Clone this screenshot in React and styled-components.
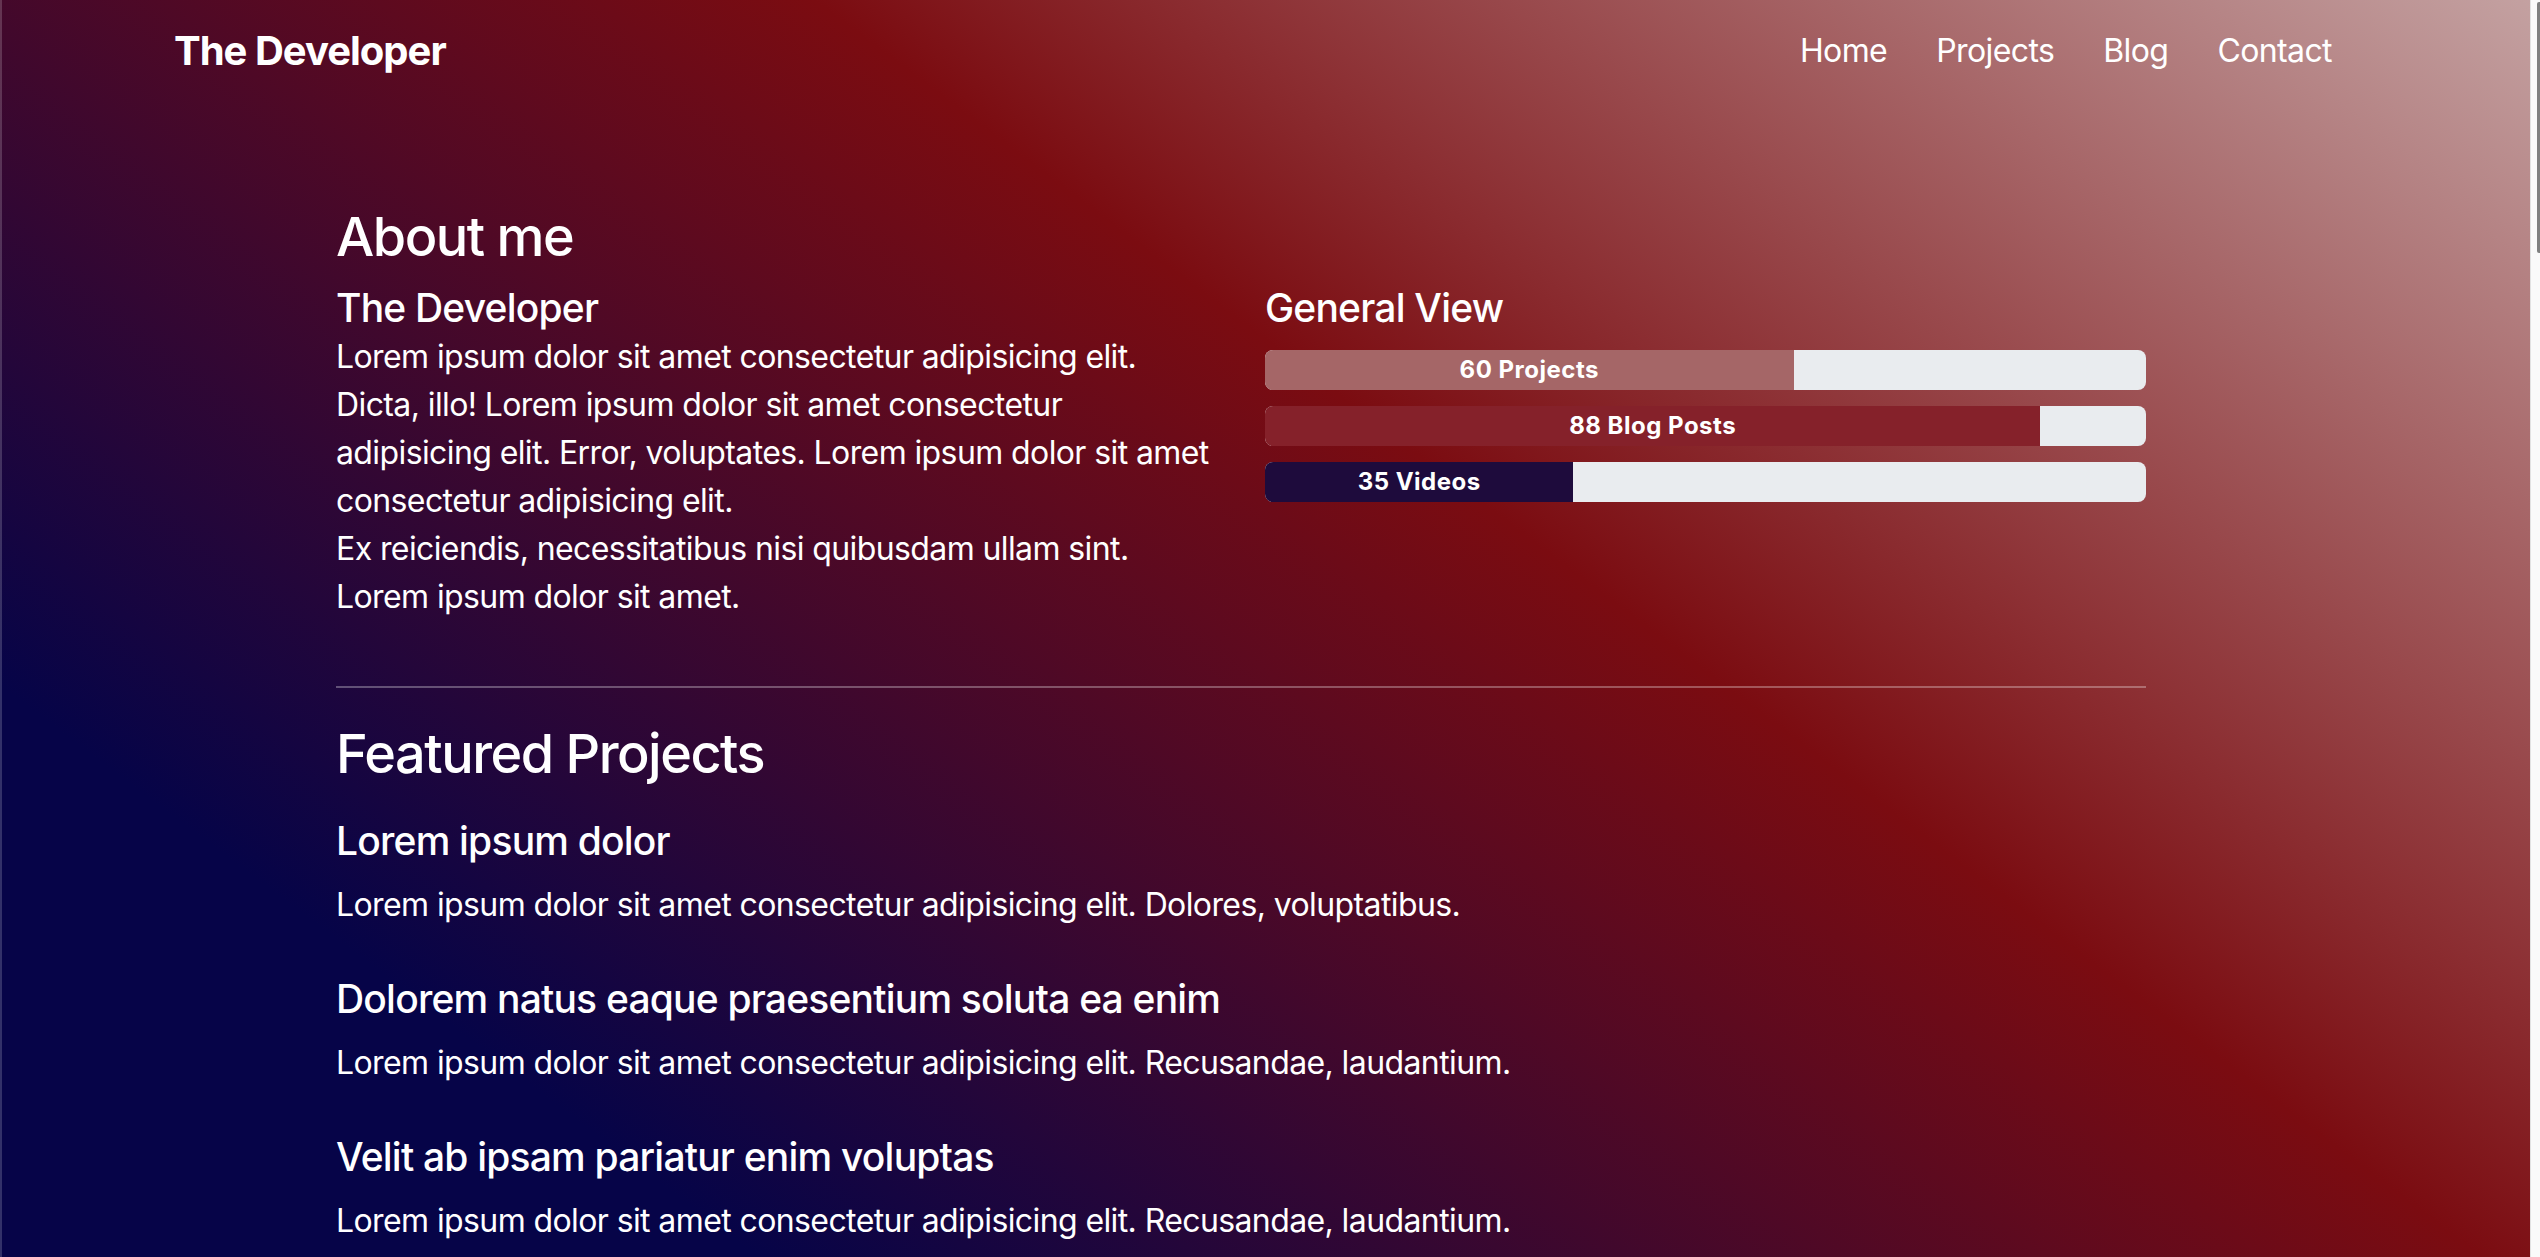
import React from 'react';
import styled, { createGlobalStyle } from 'styled-components';

const GlobalStyle = createGlobalStyle`
  body {
    margin: 0;
    color: #fff;
    font-family: Inter, "Noto Sans", sans-serif;
    background: linear-gradient(37deg, #060448 0%, #060448 18%, #7b0c11 59%, #c4a2a2 100%) fixed;
  }
`;

const stats = [
  { label: '60 Projects', value: 60, color: '#a56667' },
  { label: '88 Blog Posts', value: 88, color: '#85212a' },
  { label: '35 Videos', value: 35, color: '#1e0b3c' },
];

const projects = [
  {
    title: 'Lorem ipsum dolor',
    text: 'Lorem ipsum dolor sit amet consectetur adipisicing elit. Dolores, voluptatibus.',
  },
  {
    title: 'Dolorem natus eaque praesentium soluta ea enim',
    text: 'Lorem ipsum dolor sit amet consectetur adipisicing elit. Recusandae, laudantium.',
  },
  {
    title: 'Velit ab ipsam pariatur enim voluptas',
    text: 'Lorem ipsum dolor sit amet consectetur adipisicing elit. Recusandae, laudantium.',
  },
];

const App = () => (
  <Page>
    <GlobalStyle />
    <Header>
      <Logo href="#">The Developer</Logo>
      <NavList>
        <li><NavLink href="#">Home</NavLink></li>
        <li><NavLink href="#">Projects</NavLink></li>
        <li><NavLink href="#">Blog</NavLink></li>
        <li><NavLink href="#">Contact</NavLink></li>
      </NavList>
    </Header>
    <Main>
      <SectionTitle $gap={15}>About me</SectionTitle>
      <AboutGrid>
        <div>
          <SubTitle $gap={1}>The Developer</SubTitle>
          <Text>
            Lorem ipsum dolor sit amet consectetur adipisicing elit. Dicta, illo! Lorem ipsum dolor sit amet
            consectetur adipisicing elit. Error, voluptates. Lorem ipsum dolor sit amet consectetur adipisicing elit.
            <br />
            Ex reiciendis, necessitatibus nisi quibusdam ullam sint. Lorem ipsum dolor sit amet.
          </Text>
        </div>
        <div>
          <SubTitle $gap={18}>General View</SubTitle>
          <Bars>
            {stats.map((s) => (
              <Track key={s.label}>
                <Fill $color={s.color} style={{ width: `${s.value}%` }}>{s.label}</Fill>
              </Track>
            ))}
          </Bars>
        </div>
      </AboutGrid>
      <Divider />
      <SectionTitle $gap={32}>Featured Projects</SectionTitle>
      {projects.map((p) => (
        <Project key={p.title}>
          <SubTitle $gap={16}>{p.title}</SubTitle>
          <Text>{p.text}</Text>
        </Project>
      ))}
    </Main>
    <ScrollTrack>
      <ScrollThumb />
    </ScrollTrack>
  </Page>
);

const Page = styled.div`
  min-height: 100vh;
  box-shadow: inset 2px 0 0 rgba(255, 255, 255, 0.18);
`;

const Header = styled.header`
  display: flex;
  align-items: center;
  justify-content: space-between;
  height: 102px;
  padding: 0 208px 0 174px;
`;

const Logo = styled.a`
  font-size: 40px;
  font-weight: 700;
  line-height: 1.2;
  letter-spacing: -1px;
  color: #fff;
  text-decoration: none;
`;

const NavList = styled.ul`
  display: flex;
  gap: 49px;
  list-style: none;
  margin: 0;
  padding: 0;
`;

const NavLink = styled.a`
  font-size: 32px;
  line-height: 1.5;
  letter-spacing: -0.6px;
  color: #fff;
  text-decoration: none;
`;

const Main = styled.main`
  padding: 103px 394px 40px 336px;
`;

const SectionTitle = styled.h2`
  font-size: 54px;
  font-weight: 500;
  line-height: 1.2;
  letter-spacing: -1.5px;
  margin: 0 0 ${(p) => p.$gap}px;
`;

const SubTitle = styled.h3`
  font-size: 39px;
  font-weight: 500;
  line-height: 1.2;
  letter-spacing: -0.8px;
  margin: 0 0 ${(p) => p.$gap}px;
`;

const Text = styled.p`
  font-size: 32px;
  line-height: 48px;
  letter-spacing: -0.6px;
  margin: 0;
`;

const AboutGrid = styled.section`
  display: grid;
  grid-template-columns: 1fr 1fr;
  column-gap: 48px;
`;

const Bars = styled.div`
  display: flex;
  flex-direction: column;
  gap: 16px;
`;

const Track = styled.div`
  display: flex;
  height: 40px;
  background: #e9ecef;
  border-radius: 8px;
  overflow: hidden;
`;

const Fill = styled.div`
  display: flex;
  align-items: center;
  justify-content: center;
  background: ${(p) => p.$color};
  font-size: 24px;
  font-weight: 700;
  letter-spacing: 0.5px;
  white-space: nowrap;
`;

const Divider = styled.hr`
  height: 0;
  border: 0;
  border-top: 2px solid rgba(255, 255, 255, 0.3);
  margin: 65px 0 34px;
`;

const Project = styled.article`
  margin-bottom: 47px;
`;

const ScrollTrack = styled.div`
  position: fixed;
  top: 0;
  right: 0;
  width: 10px;
  height: 100vh;
  background: #fafafa;
  border-left: 1px solid #e2e2e2;
  box-sizing: border-box;
`;

const ScrollThumb = styled.div`
  position: absolute;
  top: 2px;
  right: 0;
  width: 3px;
  height: 251px;
  background: #808080;
  border-radius: 2px 0 0 2px;
`;

export default App;
